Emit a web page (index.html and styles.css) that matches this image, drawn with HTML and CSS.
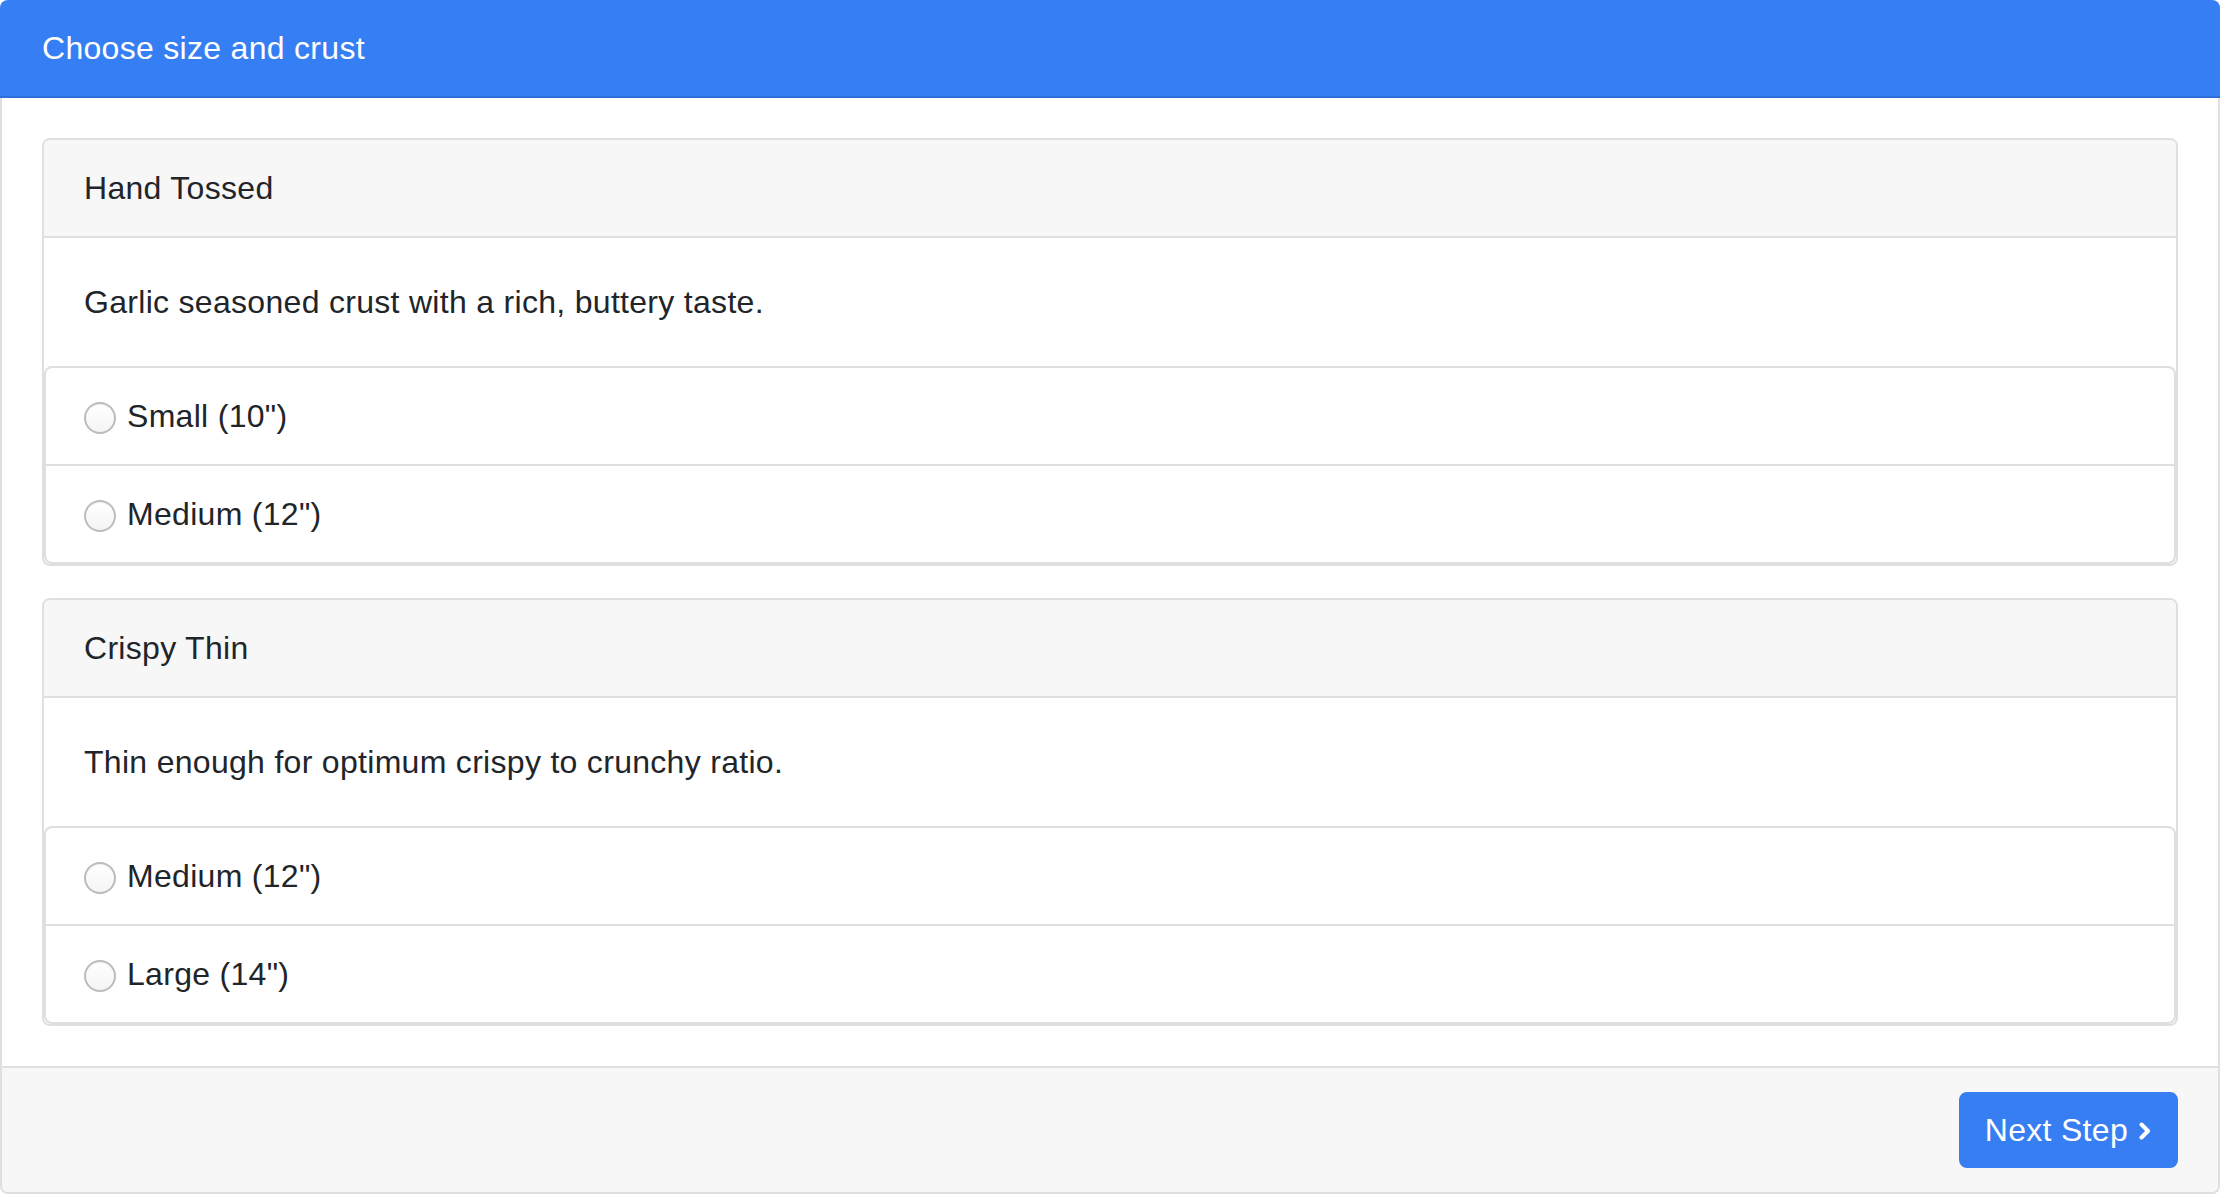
FILE: index.html
```html
<!DOCTYPE html>
<html lang="en">
<head>
<meta charset="utf-8">
<title>Choose size and crust</title>
<link rel="stylesheet" href="styles.css">
</head>
<body>
<div class="panel">
  <div class="panel-head">Choose size and crust</div>
  <div class="panel-body">
    <div class="crust">
      <div class="crust-head">Hand Tossed</div>
      <div class="crust-body"><p>Garlic seasoned crust with a rich, buttery taste.</p></div>
      <ul class="sizes">
        <li class="size"><label class="opt"><input type="radio" name="size" class="radio"><span>Small (10")</span></label></li>
        <li class="size"><label class="opt"><input type="radio" name="size" class="radio"><span>Medium (12")</span></label></li>
      </ul>
    </div>
    <div class="crust">
      <div class="crust-head">Crispy Thin</div>
      <div class="crust-body"><p>Thin enough for optimum crispy to crunchy ratio.</p></div>
      <ul class="sizes">
        <li class="size"><label class="opt"><input type="radio" name="size" class="radio"><span>Medium (12")</span></label></li>
        <li class="size"><label class="opt"><input type="radio" name="size" class="radio"><span>Large (14")</span></label></li>
      </ul>
    </div>
  </div>
  <div class="panel-foot">
    <button class="next" type="button">Next Step<svg class="chev" width="14" height="18" viewBox="0 0 14 18" aria-hidden="true"><path d="M3.5 2.5 L10 9 L3.5 15.5" fill="none" stroke="#fff" stroke-width="4" stroke-linecap="round" stroke-linejoin="round"/></svg></button>
  </div>
</div>
</body>
</html>
```
FILE: styles.css
```css
* { box-sizing: border-box; }
html, body { margin: 0; padding: 0; background: #fff; }
body {
  font-family: "Liberation Sans", Arial, sans-serif;
  font-size: 32px;
  line-height: 48px;
  letter-spacing: 0.3px;
  color: #212529;
}
.panel {
  width: 2220px;
  border: 2px solid #dfdfdf;
  border-top: 0;
  border-radius: 8px;
}
.panel-head {
  margin: 0 -2px;
  padding: 24px 42px 24px;
  background: #367ef3;
  color: #fff;
  border-bottom: 2px solid #2e6fd9;
  border-radius: 8px 8px 0 0;
}
.panel-body {
  padding: 40px;
}
.crust {
  border: 2px solid #dfdfdf;
  border-radius: 8px;
  margin-bottom: 32px;
}
.crust:last-child { margin-bottom: 0; }
.crust-head {
  padding: 24px 40px;
  background: #f7f7f7;
  border-bottom: 2px solid #dfdfdf;
  border-radius: 6px 6px 0 0;
}
.crust-body {
  padding: 40px;
}
.crust-body p { margin: 0; }
.sizes {
  list-style: none;
  margin: 0;
  padding: 0;
  border: 2px solid #dfdfdf;
  border-radius: 8px;
}
.size {
  padding: 24px 40px;
}
.size + .size {
  border-top: 2px solid #dfdfdf;
}
.opt {
  display: flex;
  align-items: center;
  gap: 11px;
}
.radio {
  appearance: none;
  -webkit-appearance: none;
  margin: 3px 0 0 -2px;
  width: 32px;
  height: 32px;
  border-radius: 50%;
  border: 2px solid #bcbcbc;
  background: linear-gradient(#ffffff, #f4f4f4);
  box-shadow: inset 0 1px 1px rgba(0,0,0,0.06);
  flex: none;
}
.panel-foot {
  display: flex;
  justify-content: flex-end;
  padding: 24px 40px;
  background: #f7f7f7;
  border-top: 2px solid #dfdfdf;
  border-radius: 0 0 6px 6px;
}
.next {
  display: flex;
  align-items: center;
  gap: 10px;
  font-family: inherit;
  font-size: 32px;
  line-height: 48px;
  letter-spacing: 0.3px;
  color: #fff;
  background: #377ef3;
  border: 2px solid #377ef3;
  border-radius: 8px;
  padding: 12px 24px;
}
.chev { display: block; margin-top: 2px; }
```
